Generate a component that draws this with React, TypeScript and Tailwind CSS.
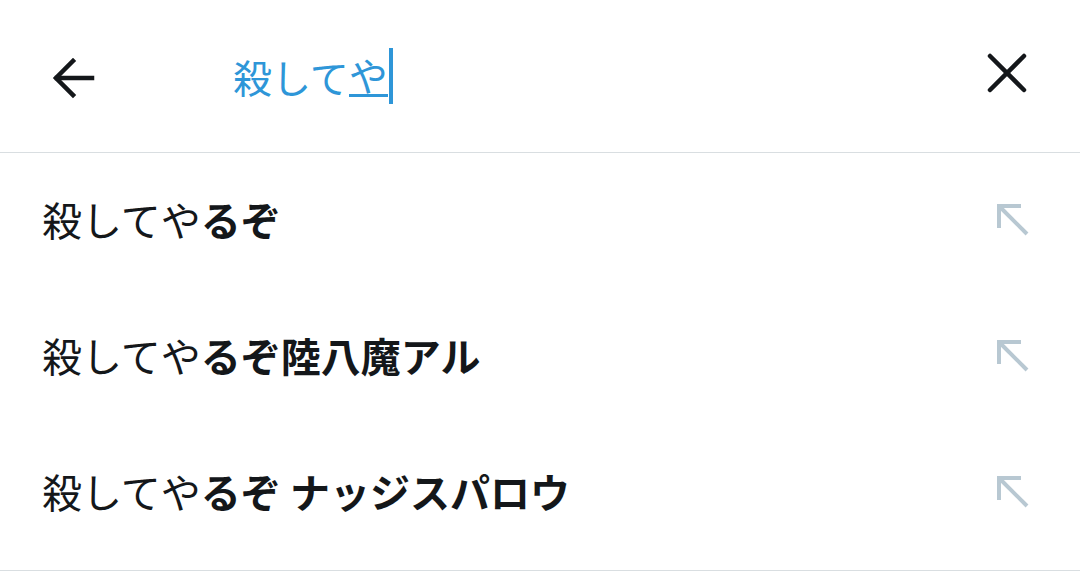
const suggestions: { typed: string; rest: string }[] = [
  { typed: '殺してや', rest: 'るぞ' },
  { typed: '殺してや', rest: 'るぞ陸八魔アル' },
  { typed: '殺してや', rest: 'るぞ ナッジスパロウ' },
];

const font = { fontFamily: '"Noto Sans CJK JP", "Noto Sans", sans-serif' };

const BackArrow = () => (
  <svg width="44" height="44" viewBox="0 0 44 44" fill="none" stroke="#14171a" strokeWidth="4.5" strokeLinecap="square">
    <path d="M41 22H6" />
    <path d="M22 5L5 22L22 39" />
  </svg>
);

const CloseIcon = () => (
  <svg width="40" height="40" viewBox="0 0 40 40" fill="none" stroke="#14171a" strokeWidth="4.5" strokeLinecap="round">
    <path d="M3 3L37 37" />
    <path d="M37 3L3 37" />
  </svg>
);

const FillArrow = () => (
  <svg width="32" height="32" viewBox="0 0 32 32" fill="none" stroke="#b8c8d2" strokeWidth="4">
    <path d="M2 24V2H24" />
    <path d="M2 2L30 30" />
  </svg>
);

export default function App() {
  return (
    <div className="w-[1080px] h-[577px] bg-white overflow-hidden" style={font}>
      {/* search header */}
      <div className="h-[153px] flex items-center border-b border-[#d9dee1]">
        <div className="w-[233px] pl-[51px] pt-[4px] flex items-center">
          <BackArrow />
        </div>
        <div className="flex-1 flex items-center">
          <span className="text-[39px] leading-none text-[#2e96d8] flex items-center">
            殺して
            <span className="border-b-[3px] border-[#2e96d8]">や</span>
            <span className="ml-[1px] w-[4px] h-[56px] bg-[#2e96d8]" />
          </span>
        </div>
        <div className="pr-[53px] pb-[6px] flex items-center">
          <CloseIcon />
        </div>
      </div>

      {/* suggestions */}
      <div className="border-b border-[#d9dee1] pb-[9px]">
        {suggestions.map((s, i) => (
          <div key={i} className="h-[136px] flex items-center justify-between pl-[42px] pr-[51px]">
            <span className="text-[40px] leading-none text-[#14171a] whitespace-pre pb-[5px]">
              {s.typed}
              <span className="font-bold">{s.rest}</span>
            </span>
            <div className="pb-[2px]">
              <FillArrow />
            </div>
          </div>
        ))}
      </div>
    </div>
  );
}
